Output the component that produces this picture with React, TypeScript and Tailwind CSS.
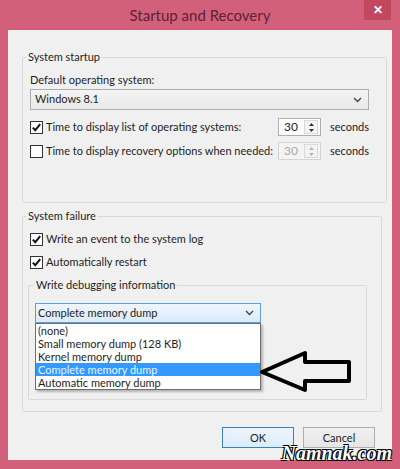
import React from 'react';

const Check = ({ on }: { on?: boolean }) => (
    <span className="w-[13px] h-[13px] border border-[#333] bg-white flex items-center justify-center shrink-0">
        {on && (
            <svg width="11" height="11" viewBox="0 0 11 11">
                <path d="M1.8 5.6 L4.3 8.2 L9.2 2.2" stroke="#111" strokeWidth="2" fill="none" />
            </svg>
        )}
    </span>
);

const Chevron = () => (
    <svg width="9" height="6" viewBox="0 0 9 6">
        <path d="M1 1 L4.5 4.5 L8 1" stroke="#444" strokeWidth="1.4" fill="none" />
    </svg>
);

const Spin = ({ disabled }: { disabled?: boolean }) => (
    <div
        className={
            disabled
                ? 'w-[43px] h-[18px] border border-[#d5d5d5] bg-[#f4f4f4] flex text-[#a8a8a8]'
                : 'w-[43px] h-[18px] border border-[#abadb3] bg-white flex text-[#1e1e1e]'
        }
    >
        <span className="flex-1 pl-[5px] leading-[16px] text-[12px]">30</span>
        <div className="w-[14px] mr-[2px] my-[1px] flex flex-col items-center justify-center gap-[3px] border border-[#d9d9d9] bg-[#f3f3f3]">
            <svg width="5" height="3" viewBox="0 0 5 3">
                <path d="M0 3 L2.5 0 L5 3 Z" fill={disabled ? '#b5b5b5' : '#333'} />
            </svg>
            <svg width="5" height="3" viewBox="0 0 5 3">
                <path d="M0 0 L2.5 3 L5 0 Z" fill={disabled ? '#b5b5b5' : '#333'} />
            </svg>
        </div>
    </div>
);

const Option = ({ label, active }: { label: string; active?: boolean }) => (
    <div
        className={
            active
                ? 'h-[13px] leading-[13px] pl-[2px] bg-[#3399ff] text-[#e8f4ff]'
                : 'h-[13px] leading-[13px] pl-[2px] text-[#1e1e1e]'
        }
    >
        {label}
    </div>
);

export default function App() {
    return (
        <div className="relative w-[400px] h-[469px] bg-[#d3607a] flex flex-col overflow-hidden font-['Lato'] text-[11px] text-[#1e1e1e]">
            {/* title bar */}
            <div className="h-[30px] flex items-center justify-center">
                <span className="text-[15px] text-[#5b2334] leading-none">Startup and Recovery</span>
            </div>
            <div className="absolute top-0 right-[9px] w-[27px] h-[20px] bg-[#c2485f] flex items-center justify-center text-white text-[12px] font-bold leading-none">
                ✕
            </div>

            {/* client area */}
            <div className="mx-[8px] mb-[9px] flex-1 bg-[#f0f0f0] pt-[19px] pl-[14px] pr-[10px]">
                <fieldset className="border border-[#d9d9d9] rounded-[2px]">
                    <legend className="ml-[3px] px-[2px] leading-[16px]">System startup</legend>
                    <div className="pl-[7px] pr-[17px] pt-[7px] pb-[42px]">
                        <div className="leading-[16px]">Default operating system:</div>
                        <div className="mt-[1px] h-[21px] border border-[#acacac] bg-gradient-to-b from-[#f4f4f4] to-[#e9e9e9] flex items-center justify-between pl-[4px] pr-[6px]">
                            <span>Windows 8.1</span>
                            <Chevron />
                        </div>
                        <div className="mt-[8px] h-[18px] flex items-center">
                            <div className="w-[248px] flex items-center gap-[3px] whitespace-nowrap">
                                <Check on />
                                <span>Time to display list of operating systems:</span>
                            </div>
                            <Spin />
                            <span className="ml-[9px]">seconds</span>
                        </div>
                        <div className="mt-[6px] h-[18px] flex items-center">
                            <div className="w-[248px] flex items-center gap-[3px] whitespace-nowrap">
                                <Check />
                                <span>Time to display recovery options when needed:</span>
                            </div>
                            <Spin disabled />
                            <span className="ml-[9px]">seconds</span>
                        </div>
                    </div>
                </fieldset>

                <fieldset className="mt-[5px] border border-[#d9d9d9] rounded-[2px]">
                    <legend className="ml-[3px] px-[2px] leading-[16px]">System failure</legend>
                    <div className="pl-[5px] pr-[14px] pt-[7px] pb-[11px]">
                        <div className="pl-[2px] h-[16px] flex items-center gap-[3px]">
                            <Check on />
                            <span>Write an event to the system log</span>
                        </div>
                        <div className="mt-[7px] pl-[2px] h-[16px] flex items-center gap-[3px]">
                            <Check on />
                            <span>Automatically restart</span>
                        </div>
                        <fieldset className="mt-[7px] border border-[#d9d9d9] rounded-[2px]">
                            <legend className="ml-[5px] px-[2px] leading-[16px]">Write debugging information</legend>
                            <div className="pl-[6px] pt-[10px] pb-[76px]">
                                <div className="relative w-[226px]">
                                    <div className="h-[20px] border border-[#5a9fe0] bg-gradient-to-b from-[#eef6fd] to-[#dbeafa] flex items-center justify-between pl-[2px] pr-[6px]">
                                        <span>Complete memory dump</span>
                                        <Chevron />
                                    </div>
                                    <div className="absolute left-0 top-full w-[226px] border border-[#6e6e6e] bg-white shadow-[2px_2px_2px_rgba(0,0,0,0.25)] z-10">
                                        <Option label="(none)" />
                                        <Option label="Small memory dump (128 KB)" />
                                        <Option label="Kernel memory dump" />
                                        <Option label="Complete memory dump" active />
                                        <Option label="Automatic memory dump" />
                                    </div>
                                </div>
                            </div>
                        </fieldset>
                    </div>
                </fieldset>

                <div className="mt-[15px] mr-[7px] flex justify-end gap-[9px]">
                    <button className="w-[72px] h-[21px] border border-[#3c7fb1] bg-gradient-to-b from-[#ecf4fc] to-[#dcecfc] text-[11px] leading-none">
                        OK
                    </button>
                    <button className="w-[72px] h-[21px] border border-[#acacac] bg-gradient-to-b from-[#f0f0f0] to-[#e5e5e5] text-[11px] leading-none">
                        Cancel
                    </button>
                </div>
            </div>

            {/* annotation arrow */}
            <svg className="absolute left-[258px] top-[349px] z-20" width="96" height="46" viewBox="0 0 96 46">
                <path
                    d="M4 23 L47 4 L47 13 L91 13 L91 32 L47 32 L47 41 Z"
                    fill="none"
                    stroke="#000"
                    strokeWidth="4"
                    strokeLinejoin="round"
                />
            </svg>

            {/* watermark */}
            <div className="absolute right-[8px] bottom-[6px] z-20 font-['Liberation_Serif'] italic font-bold text-[20px] leading-none text-white [text-shadow:1px_1px_0_#000,-1px_-1px_0_#000,1px_-1px_0_#000,-1px_1px_0_#000]">
                Namnak.com
            </div>
        </div>
    );
}
